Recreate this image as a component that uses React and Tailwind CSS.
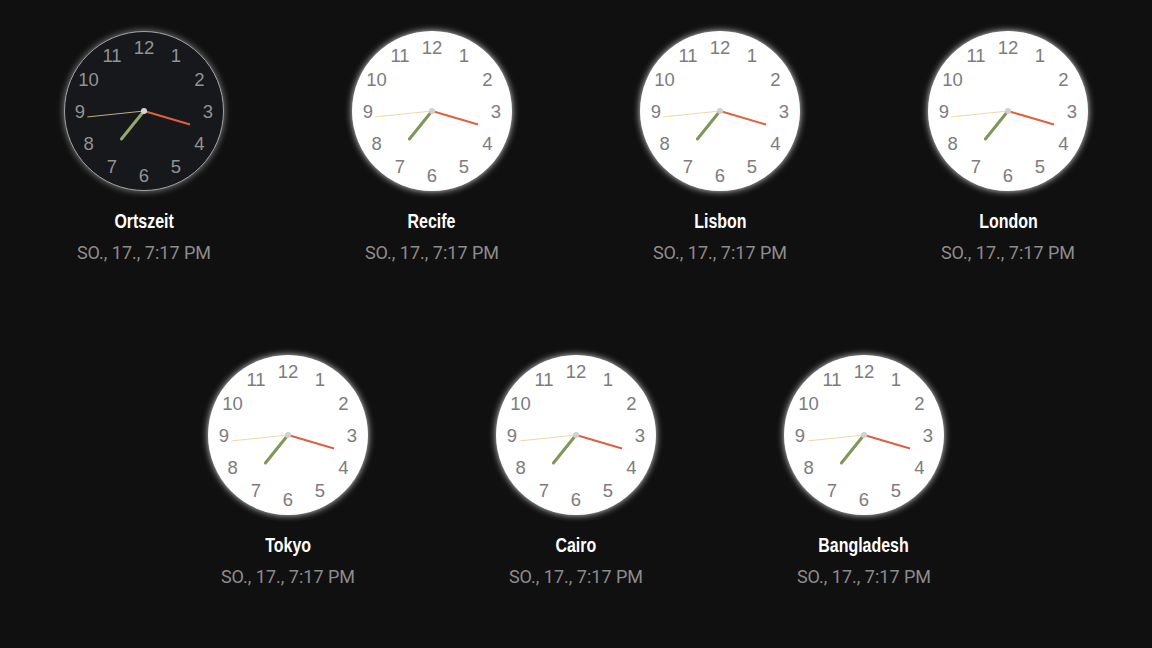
import React from 'react'

const zones = [
  { name: 'Ortszeit', dark: true },
  { name: 'Recife' },
  { name: 'Lisbon' },
  { name: 'London' },
  { name: 'Tokyo' },
  { name: 'Cairo' },
  { name: 'Bangladesh' },
]

// 7:17:44
const H = 7, M = 17, S = 44

function hand(angle, len) {
  const rad = (angle * Math.PI) / 180
  return { x2: 80 + Math.sin(rad) * len, y2: 80 - Math.cos(rad) * len }
}

function Clock({ dark }) {
  const secA = S * 6
  const minA = M * 6 + S * 0.1
  const hourA = H * 30 + M * 0.5 + S / 120

  return (
    <div
      className={
        'w-[160px] h-[160px] rounded-full ' +
        (dark
          ? 'bg-[#16181c] border border-[#a0a0a0] shadow-[0_0_7px_rgba(255,255,255,0.5)]'
          : 'bg-white shadow-[0_0_7px_rgba(255,255,255,0.85)]')
      }
    >
      <svg width="160" height="160" viewBox="0 0 160 160" className={dark ? '-m-px' : ''}>
        {[12, 1, 2, 3, 4, 5, 6, 7, 8, 9, 10, 11].map((n) => {
          const a = ((n % 12) * 30 * Math.PI) / 180
          return (
            <text
              key={n}
              x={80 + Math.sin(a) * 64}
              y={80 - Math.cos(a) * 64}
              textAnchor="middle"
              dominantBaseline="central"
              fontSize="18.5"
              fontFamily="'Liberation Sans', Arial, sans-serif"
              fill={dark ? '#939393' : '#7c7c7c'}
            >
              {n}
            </text>
          )
        })}
        <line x1="80" y1="80" {...hand(secA, 57)} stroke={dark ? '#bfae7c' : '#f1d8a6'} strokeWidth="1" />
        <line x1="80" y1="80" {...hand(hourA, 36)} stroke={dark ? '#93a86a' : '#7f9656'} strokeWidth="3" strokeLinecap="round" />
        <line x1="80" y1="80" {...hand(minA, 48)} stroke="#e0603f" strokeWidth="2" />
        <circle cx="80" cy="80" r="3" fill={dark ? '#d6d6d6' : '#d0d0d0'} />
      </svg>
    </div>
  )
}

export default function App() {
  return (
    <div className="min-h-screen bg-[#101010] flex flex-wrap justify-center">
      {zones.map((z) => (
        <div key={z.name} className="w-[288px] h-[324px] flex flex-col items-center pt-[31px]">
          <Clock dark={z.dark} />
          {/* nombre de la zona */}
          <div className="mt-4 h-7 leading-7 text-white font-bold text-[21px] scale-x-[0.76] font-['Liberation_Sans',sans-serif]">
            {z.name}
          </div>
          <div className="mt-1.5 h-6 leading-6 text-[18px] text-[#8c8c8c] font-['Roboto',sans-serif]">
            SO., 17., 7:17 PM
          </div>
        </div>
      ))}
    </div>
  )
}
